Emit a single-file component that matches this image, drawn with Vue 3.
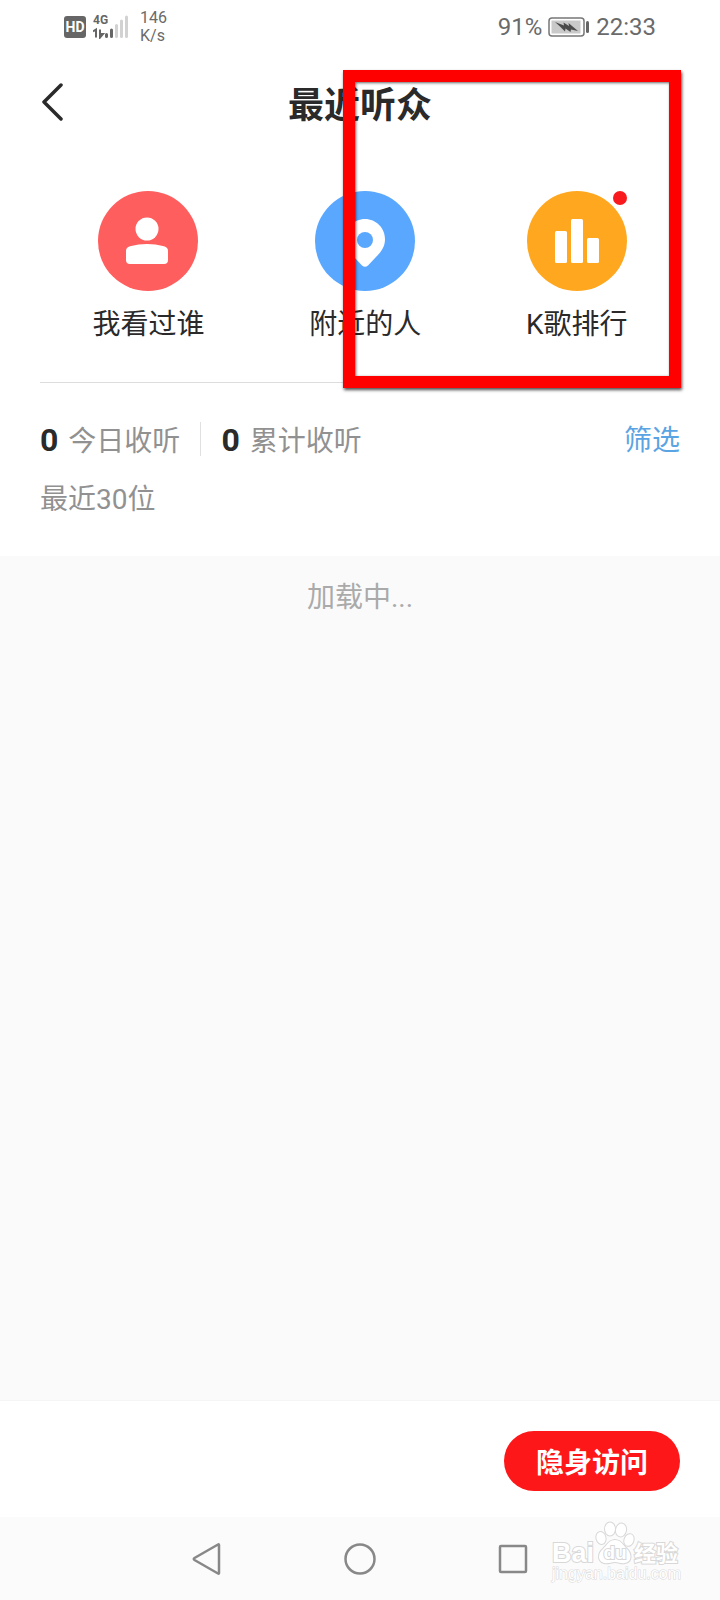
<script setup>
const shortcuts = [
  { id: 'viewed', label: '我看过谁', badge: false },
  { id: 'nearby', label: '附近的人', badge: false },
  { id: 'ranking', label: 'K歌排行', badge: true },
]
const stats = [
  { value: 0, label: '今日收听' },
  { value: 0, label: '累计收听' },
]
</script>

<template>
  <div class="page">
    <div class="status">
      <svg class="hd" width="22" height="22" viewBox="0 0 22 22" role="img" aria-label="HD">
        <rect width="22" height="22" rx="3" fill="#666" />
        <text x="11" y="16" text-anchor="middle" font-size="14" font-weight="700" fill="#fff">HD</text>
      </svg>
      <svg class="signal" width="36" height="28" viewBox="0 -4 36 28" role="img" aria-label="4G">
        <text x="0" y="9" font-size="12" font-weight="700" fill="#666">4G</text>
        <path d="M0 16.500L3 14.500V22.500M7 14.500V22.500L10 19H7" fill="none" stroke="#666" stroke-width="2" />
        <path d="M13.500 19.500V21.500M18.500 15V21.500" stroke="#666" stroke-width="3" stroke-linecap="round" />
        <path d="M23.500 10.500V21.500M28.500 6V21.500M33.500 2V21.500" stroke="#d2d2d2" stroke-width="3" stroke-linecap="round" />
      </svg>
      <div class="speed"><span>146</span><span>K/s</span></div>
      <div class="power">
        <span>91%</span>
        <svg width="42" height="20" viewBox="0 0 42 20" role="img" aria-label="充电中">
          <rect x="1" y="1" width="35" height="18" rx="3" fill="#fff" stroke="#777" stroke-width="1.500" />
          <rect x="3.500" y="3.500" width="29" height="13" fill="#c9c9c9" />
          <path d="M7 5L16 8.500L15.500 5.500L21 9L20.500 6L30 14L23 12.500L22.500 15L17.500 11.500L17 14.500L12 9.500Z" fill="#4b4b4b" />
          <rect x="38" y="4" width="3" height="12" rx="1.500" fill="#666" />
        </svg>
        <time>22:33</time>
      </div>
    </div>

    <header class="header">
      <button class="back" type="button" aria-label="返回">
        <svg width="24" height="40" viewBox="0 0 24 40">
          <path d="M21 2L4 19L21 36" fill="none" stroke="#2a2a2a" stroke-width="3.500" stroke-linecap="round" stroke-linejoin="round" />
        </svg>
      </button>
      <h1>最近听众</h1>
    </header>

    <nav class="shortcuts" aria-label="快捷入口">
      <a v-for="item in shortcuts" :key="item.id" class="shortcut" href="#">
        <span class="disc" :class="item.id">
          <svg v-if="item.id === 'viewed'" width="100" height="100" viewBox="0 0 100 100" fill="#fff">
            <circle cx="49" cy="38" r="11.500" />
            <path d="M28 60Q28 56.500 32 55.300Q49 50.500 66 55.300Q70 56.500 70 60V69Q70 73 66 73H32Q28 73 28 69Z" />
          </svg>
          <svg v-else-if="item.id === 'nearby'" width="100" height="100" viewBox="0 0 100 100">
            <path d="M50 28C61 28 70 37 70 48C70 56 66 61 61 66L53 74.500Q50 77 47 74.500L39 66C34 61 30 56 30 48C30 37 39 28 50 28Z" fill="#fff" />
            <circle cx="50" cy="49" r="8" fill="#5aa7ff" />
          </svg>
          <svg v-else width="100" height="100" viewBox="0 0 100 100" fill="#fff">
            <rect x="28" y="40" width="12" height="32" rx="1.500" />
            <rect x="44" y="28" width="12" height="44" rx="1.500" />
            <rect x="60" y="47" width="12" height="25" rx="1.500" />
          </svg>
          <i v-if="item.badge" class="badge"></i>
        </span>
        <span class="label">{{ item.label }}</span>
      </a>
    </nav>

    <section class="summary">
      <div class="row">
        <p v-for="stat in stats" :key="stat.label" class="stat">
          <strong>{{ stat.value }}</strong><span>{{ stat.label }}</span>
        </p>
        <button class="filter" type="button">筛选</button>
      </div>
      <p class="recent">最近30位</p>
    </section>

    <main class="list">加载中...</main>

    <footer class="actions">
      <button class="stealth" type="button">隐身访问</button>
    </footer>

    <div class="system">
      <button type="button" aria-label="返回">
        <svg width="32" height="32" viewBox="0 0 32 32"><path d="M28 2V30Q28 31 27 30.500L3.500 17Q2 16 3.500 15L27 1.500Q28 1 28 2Z" /></svg>
      </button>
      <button type="button" aria-label="主屏幕">
        <svg width="32" height="32" viewBox="0 0 32 32"><circle cx="16" cy="16" r="14.500" /></svg>
      </button>
      <button type="button" aria-label="最近任务">
        <svg width="32" height="32" viewBox="0 0 32 32"><rect x="3" y="3" width="26" height="26" rx="1" /></svg>
      </button>
      <svg class="watermark" width="132" height="64" viewBox="0 0 132 64" role="img" aria-label="Baidu 经验">
        <g fill="#fff" stroke="#d8d8d8" stroke-width="2" paint-order="stroke">
          <text x="2" y="41" font-size="27" font-weight="700">Bai</text>
          <ellipse cx="51" cy="17" rx="4.500" ry="6" transform="rotate(-15 51 17)" />
          <ellipse cx="60" cy="8" rx="5" ry="6.500" />
          <ellipse cx="71" cy="9" rx="5" ry="6.500" transform="rotate(12 71 9)" />
          <ellipse cx="79" cy="19" rx="4.500" ry="6" transform="rotate(20 79 19)" />
          <path d="M65 19C71 19 73 24 77 28C82 33 82 41 75 42C71 43 69 41 65 41S58 43 54 42C47 40 48 32 53 28C57 24 59 19 65 19Z" />
          <text x="65" y="38" text-anchor="middle" font-size="19" font-weight="700">du</text>
          <text x="84" y="40" font-size="22" font-weight="700">经验</text>
          <text x="2" y="58" font-size="16" stroke-width="1">jingyan.baidu.com</text>
        </g>
      </svg>
    </div>

    <div class="highlight" aria-hidden="true"></div>
  </div>
</template>

<style>
body {
  margin: 0;
  background: #fff;
}
</style>

<style scoped>
.page {
  position: relative;
  display: flex;
  flex-direction: column;
  min-height: 100vh;
  background: #fff;
  color: #2a2a2a;
  font-family: Roboto, "Noto Sans CJK SC", sans-serif;
  font-size: 28px;
  line-height: 40px;
}
button {
  padding: 0;
  border: 0;
  background: none;
  color: inherit;
  font: inherit;
  cursor: pointer;
}
a {
  color: inherit;
  text-decoration: none;
}
p,
h1 {
  margin: 0;
}
svg {
  display: block;
}
.status {
  display: flex;
  align-items: center;
  height: 54px;
  padding: 0 64px;
  color: #6a6a6a;
}
.signal {
  margin: 0 11px 4px 7px;
}
.speed {
  display: flex;
  flex-direction: column;
  font-size: 16px;
  line-height: 18px;
}
.power {
  display: flex;
  align-items: center;
  gap: 6px;
  margin-left: auto;
  font-size: 24px;
}
.header {
  display: flex;
  align-items: center;
  height: 98px;
  padding: 0 40px;
}
.back {
  width: 24px;
}
h1 {
  flex: 1;
  margin-right: 24px;
  padding-top: 6px;
  font-size: 36px;
  line-height: 48px;
  font-weight: 700;
  text-align: center;
}
.shortcuts {
  display: flex;
  justify-content: space-around;
  margin: 0 40px;
  padding: 39px 0 37px;
  border-bottom: 1px solid #ddd;
}
.shortcut {
  display: flex;
  flex-direction: column;
  align-items: center;
  gap: 14px;
}
.disc {
  position: relative;
  border-radius: 50%;
}
.viewed {
  background: #ff5e5e;
}
.nearby {
  background: #5aa7ff;
}
.ranking {
  background: #ffa81f;
}
.badge {
  position: absolute;
  top: 0;
  right: 0;
  width: 14px;
  height: 14px;
  border-radius: 50%;
  background: #f81a1d;
}
.summary {
  padding: 37px 40px 36px;
  color: #919191;
}
.row {
  display: flex;
  align-items: center;
}
.stat {
  position: relative;
  display: flex;
  align-items: baseline;
  gap: 10px;
}
.stat + .stat {
  margin-left: 41px;
}
.stat + .stat::before {
  content: "";
  position: absolute;
  top: 2px;
  left: -21px;
  width: 1px;
  height: 34px;
  background: #e0e0e0;
}
.stat strong {
  color: #2a2a2a;
  font-size: 32px;
}
.filter {
  margin-left: auto;
  color: #5ba4e3;
}
.recent {
  margin-top: 18px;
}
.list {
  flex: 1;
  padding-top: 22px;
  background: #fafafa;
  color: #aaa;
  text-align: center;
}
.actions {
  display: flex;
  justify-content: flex-end;
  padding: 30px 40px 26px;
  border-top: 1px solid #f5f5f5;
}
.stealth {
  padding: 13px 32px 7px;
  border-radius: 30px;
  background: #fd1718;
  color: #fff;
  font-weight: 700;
}
.system {
  position: relative;
  display: flex;
  align-items: center;
  justify-content: center;
  gap: 121px;
  height: 83px;
  background: #fbfbfb;
}
.system button svg {
  fill: none;
  stroke: #888;
  stroke-width: 2.5;
}
.watermark {
  position: absolute;
  top: 4px;
  right: 38px;
  font-family: "Liberation Sans", "Noto Sans CJK SC", sans-serif;
}
.highlight {
  position: absolute;
  top: 70px;
  right: 39px;
  left: 343px;
  height: 294px;
  border: 12px solid #f00;
  box-shadow: 1px 2px 3px rgba(0, 0, 0, 0.7), inset 1px 1px 3px rgba(0, 0, 0, 0.6);
  pointer-events: none;
}
</style>
